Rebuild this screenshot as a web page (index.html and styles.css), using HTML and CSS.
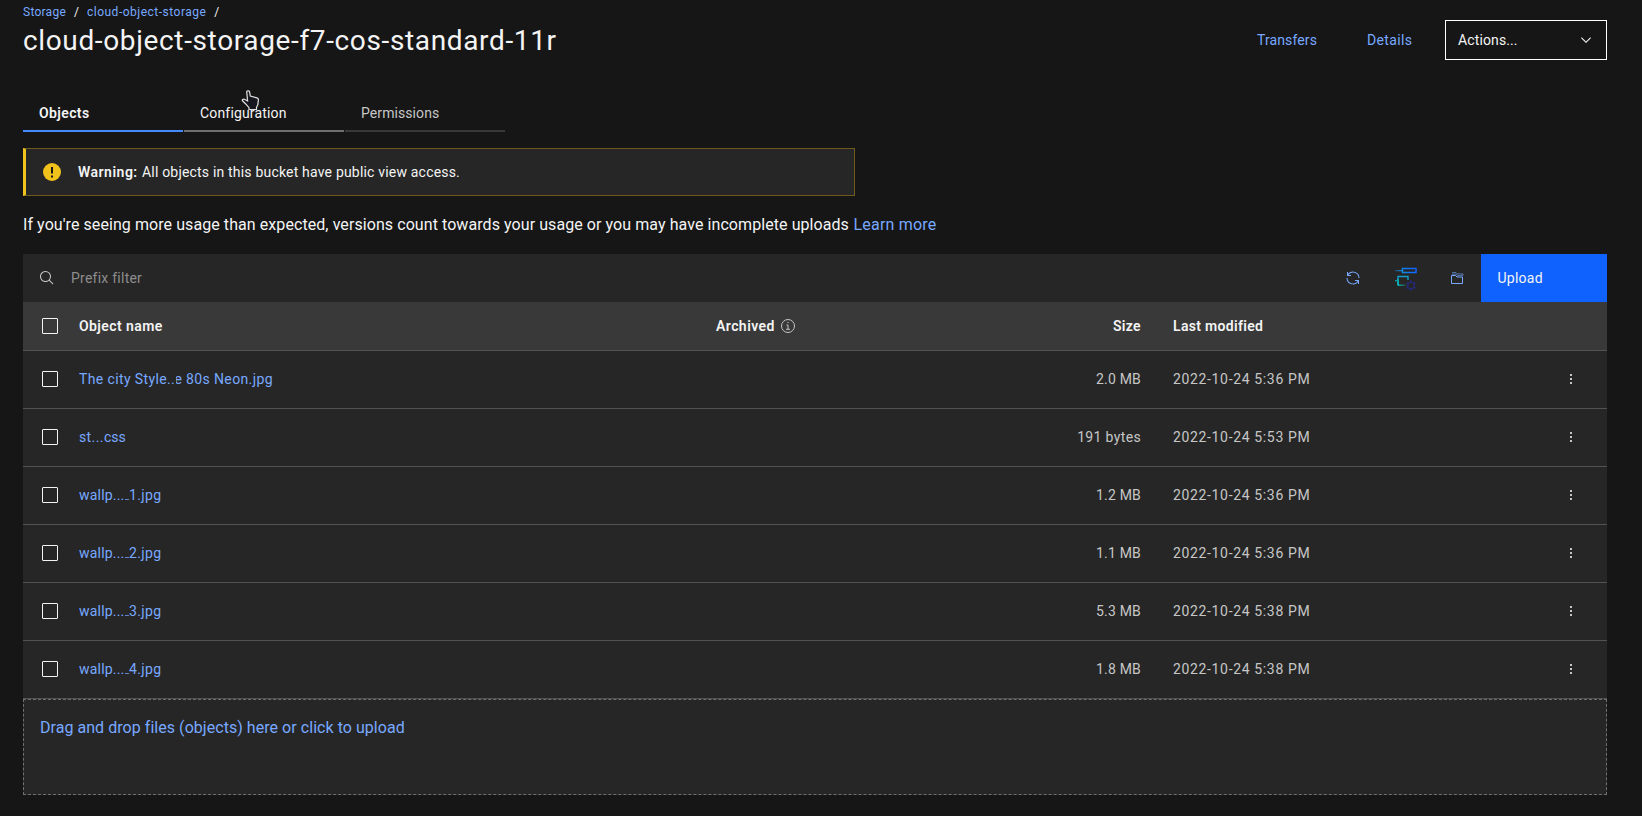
FILE: index.html
```html
<!DOCTYPE html>
<html lang="en">
<head>
<meta charset="utf-8">
<title>cloud-object-storage-f7-cos-standard-11r</title>
<link rel="stylesheet" href="styles.css">
</head>
<body>
<svg class="defs" width="0" height="0" aria-hidden="true">
  <defs>
    <linearGradient id="flow" gradientUnits="userSpaceOnUse" x1="0" y1="22" x2="22" y2="2">
      <stop offset="0" stop-color="#08bdba"/><stop offset=".35" stop-color="#12a5c4"/><stop offset=".8" stop-color="#0f6fff"/><stop offset="1" stop-color="#0f62fe"/>
    </linearGradient>
    <linearGradient id="fadeTop" gradientUnits="userSpaceOnUse" x1="0" y1="0" x2="8" y2="0">
      <stop offset="0" stop-color="#1192e8" stop-opacity=".3"/><stop offset="1" stop-color="#1192e8"/>
    </linearGradient>
    <linearGradient id="fadeEnd" gradientUnits="userSpaceOnUse" x1="3" y1="0" x2="11" y2="0">
      <stop offset="0" stop-color="#08bdba"/><stop offset="1" stop-color="#08bdba" stop-opacity=".2"/>
    </linearGradient>
    <symbol id="dots" viewBox="0 0 2 10"><path d="M0 0h2v2H0zM0 4h2v2H0zM0 8h2v2H0z"/></symbol>
  </defs>
</svg>
<main class="page">
  <header class="header">
    <div class="heading">
      <nav class="breadcrumb"><a class="crumb">Storage</a><span class="slash">/</span><a class="crumb crumb-parent">cloud-object-storage</a><span class="slash">/</span></nav>
      <h1 class="title">cloud-object-storage-f7-cos-standard-11r</h1>
    </div>
    <div class="actions">
      <a class="link transfers">Transfers</a>
      <a class="link details">Details</a>
      <button class="dropdown"><span>Actions...</span>
        <svg width="16" height="16" viewBox="0 0 16 16"><path d="M8 11L3 6 3.7 5.3 8 9.6 12.3 5.3 13 6z"/></svg>
      </button>
    </div>
  </header>

  <nav class="tabs">
    <a class="tab active">Objects</a>
    <a class="tab hover">Configuration
      <svg class="cursor" width="20" height="21" viewBox="0 0 20 21"><path d="M5.7 1.6c0-1.1 2.6-1.1 2.8 0L9.3 6l6.6 1.8c1.1.3 1.6 1 1.5 2.1l-.6 5-1.3 2.4v2.2H8v-1.8L5 14.2 1.500 10.800c-.7-1 .6-2.100 1.900-1.500L6.600 11z"/></svg>
    </a>
    <a class="tab permissions">Permissions</a>
  </nav>

  <section class="warning">
    <svg width="18" height="18" viewBox="0 0 18 18"><circle cx="9" cy="9" r="9" fill="#f1c21b"/><path d="M8 4h2v6.500H8zM8 12.500h2v2H8z" fill="#161616"/></svg>
    <strong>Warning:</strong><span>All objects in this bucket have public view access.</span>
  </section>

  <p class="notice"><span>If you're seeing more usage than expected, versions count towards your usage or you may have incomplete uploads</span><a class="learn">Learn more</a></p>

  <section class="objects">
    <div class="toolbar">
      <svg class="search" width="16" height="16" viewBox="0 0 32 32"><path d="M29 27.586l-7.552-7.552a11.018 11.018 0 1 0-1.414 1.414L27.586 29zM4 13a9 9 0 1 1 9 9 9.010 9.010 0 0 1-9-9z"/></svg>
      <span class="placeholder">Prefix filter</span>
      <div class="tools">
        <svg width="16" height="16" viewBox="0 0 32 32"><path fill="#78a9ff" d="M12 10H6.780A11 11 0 0 1 27 16h2A13 13 0 0 0 6 7.680V4H4v8h8zM20 22h5.220A11 11 0 0 1 5 16H3a13 13 0 0 0 23 8.320V28h2v-8h-8z"/></svg>
        <svg class="flow" width="22" height="24" viewBox="0 0 22 24" fill="none">
          <path d="M7.500 1.500h13.500v4H7.500z" stroke="url(#flow)" stroke-width="1.500"/>
          <rect x="0" y="3" width="7" height="1.300" fill="url(#fadeTop)"/>
          <path d="M3 18V9.500h10V13" stroke="#129dd0" stroke-width="1.400"/>
          <path d="M3 12v6.500" stroke="#08bdba" stroke-width="1.400"/>
          <rect x="3" y="17.500" width="8" height="1.400" fill="url(#fadeEnd)"/>
          <rect x="0" y="13" width="3" height="1.300" fill="#0b9b9a"/>
          <circle cx="16" cy="18.500" r="3.300" stroke="#25297a" stroke-width="1.300"/>
          <path d="M16 13.300v2M16 21.700v2M11.500 15.900l1.700 1M18.800 20.100l1.700 1M20.500 15.900l-1.700 1M13.200 20.100l-1.700 1" stroke="#25297a" stroke-width="1.500"/>
        </svg>
        <svg class="folder" width="14" height="14" viewBox="0 0 14 14" fill="none" stroke="#78a9ff"><path d="M1.500 12.500v-8h4l1.500 1.500h5.500v6.500z"/><path d="M2 1.600h4l1.300 1.300H13v1.500H7.300L6 3.200H2" stroke-width=".8" opacity=".75"/></svg>
      </div>
      <button class="upload">Upload</button>
    </div>

    <div class="row head">
      <span class="check"></span><span class="name">Object name</span>
      <span class="archived">Archived <svg width="16" height="16" viewBox="0 0 16 16" fill="none" stroke="#c6c6c6"><circle cx="8" cy="8" r="6.500"/><path d="M6.500 7H8v4.200M6 11.300h4M7.400 4.500h1.200"/></svg></span>
      <span class="size">Size</span><span class="date">Last modified</span>
    </div>
    <div class="row">
      <span class="check"></span><a class="name"><span class="start long">The city Style..</span><span class="clip-e"><i>e</i></span><span class="end">80s Neon.jpg</span></a>
      <span class="archived"></span><span class="size size-mb">2.0 MB</span><span class="date">2022-10-24 5:36 PM</span><svg class="more"><use href="#dots"/></svg>
    </div>
    <div class="row">
      <span class="check"></span><a class="name"><span class="start short">st...</span><span class="css">css</span></a>
      <span class="archived"></span><span class="size">191 bytes</span><span class="date">2022-10-24 5:53 PM</span><svg class="more"><use href="#dots"/></svg>
    </div>
    <div class="row">
      <span class="check"></span><a class="name"><span class="start mid">wallp...</span><span class="under">_</span><span class="tail">1.jpg</span></a>
      <span class="archived"></span><span class="size size-mb">1.2 MB</span><span class="date">2022-10-24 5:36 PM</span><svg class="more"><use href="#dots"/></svg>
    </div>
    <div class="row">
      <span class="check"></span><a class="name"><span class="start mid">wallp...</span><span class="under">_</span><span class="tail">2.jpg</span></a>
      <span class="archived"></span><span class="size size-mb">1.1 MB</span><span class="date">2022-10-24 5:36 PM</span><svg class="more"><use href="#dots"/></svg>
    </div>
    <div class="row">
      <span class="check"></span><a class="name"><span class="start mid">wallp...</span><span class="under">_</span><span class="tail">3.jpg</span></a>
      <span class="archived"></span><span class="size size-mb">5.3 MB</span><span class="date">2022-10-24 5:38 PM</span><svg class="more"><use href="#dots"/></svg>
    </div>
    <div class="row">
      <span class="check"></span><a class="name"><span class="start mid">wallp...</span><span class="under">_</span><span class="tail">4.jpg</span></a>
      <span class="archived"></span><span class="size size-mb">1.8 MB</span><span class="date">2022-10-24 5:38 PM</span><svg class="more"><use href="#dots"/></svg>
    </div>
    <div class="dropzone">Drag and drop files (objects) here or click to upload</div>
  </section>
</main>
</body>
</html>
```
FILE: styles.css
```css
* { box-sizing: border-box; }
html, body { margin: 0; height: 100%; }
body {
  background: #161616;
  color: #f4f4f4;
  font: 14px/18px Roboto, "Liberation Sans", sans-serif;
  overflow: hidden;
}
a { color: #78a9ff; text-decoration: none; }
button { font: inherit; color: inherit; margin: 0; border: 0; text-align: left; }
svg { display: block; fill: currentColor; flex: none; }
svg[fill="none"] { fill: none; }
.defs { position: absolute; }
.page { width: 1584px; margin-left: 23px; }

.header { display: flex; justify-content: space-between; height: 96px; }
.heading { padding-top: 4px; }
.breadcrumb { display: flex; font-size: 12px; line-height: 16px; }
.crumb { letter-spacing: .25px; }
.crumb-parent { letter-spacing: .5px; }
.slash { margin: 0 8px 0 8px; }
.title { margin: 3px 0 0; font-size: 28px; line-height: 36px; font-weight: 400; letter-spacing: .64px; }
.actions { display: flex; align-items: center; height: 40px; margin-top: 20px; }
.transfers { width: 110px; letter-spacing: .11px; }
.details { width: 78px; letter-spacing: .35px; }
.dropdown {
  display: flex; align-items: center; justify-content: space-between;
  width: 162px; height: 40px; padding: 0 12px; border: 1px solid #fff; background: #161616; letter-spacing: .12px;
}
.dropdown svg { color: #f4f4f4; }

.tabs { display: flex; gap: 1px; height: 36px; }
.tab {
  position: relative; width: 160px; padding: 8px 16px 0;
  border-bottom: 2px solid #393939; color: #c6c6c6; letter-spacing: .17px;
}
.active { border-color: #4589ff; color: #f4f4f4; font-weight: 600; letter-spacing: .38px; }
.hover { border-color: #6f6f6f; color: #f4f4f4; }
.permissions { letter-spacing: .08px; }
.cursor { position: absolute; left: 57px; top: -6px; fill: #16161f; stroke: #e0e0e0; stroke-width: 1.2; }

.warning {
  display: flex; align-items: center; width: 832px; height: 48px; margin-top: 16px; padding-left: 17px;
  border: 1px solid #6e5a1b; border-left: 3px solid #f1c21b; background: #262626;
}
.warning strong { width: 64px; margin-left: 17px; font-weight: 600; letter-spacing: .5px; }
.warning span { letter-spacing: .19px; }

.notice { display: flex; margin: 18px 0 0; font-size: 16px; line-height: 22px; letter-spacing: .073px; }
.notice span { width: 830.5px; white-space: nowrap; }
.learn { letter-spacing: .2px; }

.objects { margin-top: 18px; background: #262626; }
.toolbar { display: flex; align-items: center; height: 48px; padding-left: 16px; }
.search { color: #c6c6c6; }
.placeholder { margin-left: 16px; color: #8d8d8d; letter-spacing: .24px; }
.tools { display: flex; align-items: center; margin-left: auto; padding-right: 17px; }
.flow { margin: 1px 33px 0 34px; }
.upload { width: 126px; height: 48px; padding: 0 16.5px; background: #0f62fe; letter-spacing: .25px; }

.row {
  display: grid; grid-template-columns: 56px 637px 301px 124px 32px 397px 1fr;
  align-items: center; height: 58px; padding-bottom: 2px; border-bottom: 1px solid #525252; color: #c6c6c6;
}
.head { height: 49px; padding-bottom: 0; background: #393939; color: #f4f4f4; font-weight: 600; }
.check { width: 16px; height: 16px; margin-left: 19px; border: 1px solid #f4f4f4; border-radius: 1px; }
.name { display: flex; letter-spacing: .38px; }
.head .name { letter-spacing: .42px; }
.long { width: 97px; }
.short { width: 25px; }
.css { letter-spacing: 0; }
.mid { width: 46px; letter-spacing: .2px; }
.under { width: 4px; padding-top: 2px; font-size: 9px; line-height: 16px; letter-spacing: 0; }
.name i { font-style: normal; }
.clip-e { width: 10px; overflow: hidden; }
.clip-e i { margin-left: -1.5px; }
.archived { display: flex; align-items: center; gap: 5px; letter-spacing: .44px; }
.head .archived { line-height: 16px; padding-bottom: 1px; }
.size { text-align: right; letter-spacing: .35px; }
.size-mb { letter-spacing: .2px; }
.date { grid-column: 6; letter-spacing: .65px; }
.head .date { letter-spacing: .32px; }
.more { width: 2px; height: 10px; grid-column: 7; }

.dropzone {
  height: 96px; padding: 16px 16px; border: 1px dashed #6f6f6f; color: #78a9ff;
  font-size: 16px; line-height: 24px; letter-spacing: .045px;
}
```
